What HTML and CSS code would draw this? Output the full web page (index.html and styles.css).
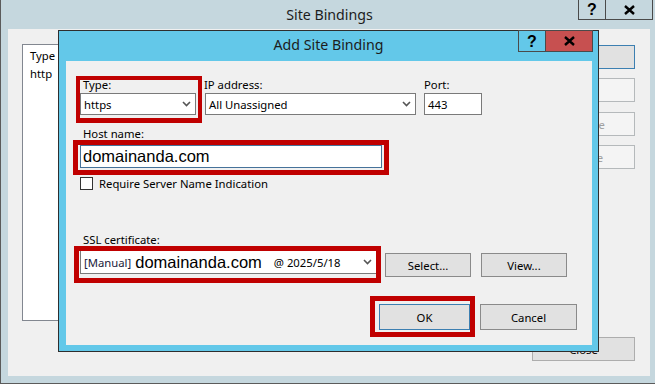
FILE: index.html
```html
<!DOCTYPE html>
<html lang="en">
<head>
  <meta charset="UTF-8"/>
  <title>Site Bindings</title>
  <link rel="stylesheet" href="styles.css">
</head>
<body>
  <div class="desktop">
    <div class="window">
      <div class="titlebar">
        <span></span>
        <span class="title">Site Bindings</span>
        <div class="caption">
          <button class="cap">?</button>
          <button class="cap cap-close">
            <svg width="11" height="10" viewBox="0 0 11 10"><path d="M1 1 L10 9 M10 1 L1 9" stroke="#000" stroke-width="2.4"/></svg>
          </button>
        </div>
      </div>
      <div class="client">
        <div class="list">
          <div class="list-head"><span>Type</span></div>
          <div class="list-row"><span>http</span></div>
        </div>
        <div class="side-buttons">
          <button class="btn default">Add...</button>
          <button class="btn" disabled>Edit...</button>
          <button class="btn" disabled>Remove</button>
          <button class="btn" disabled>Browse</button>
          <button class="btn btn-close">Close</button>
        </div>
      </div>
    </div>

    <div class="dialog">
      <div class="titlebar dlg-titlebar">
        <span></span>
        <span class="title">Add Site Binding</span>
        <div class="caption">
          <button class="cap">?</button>
          <button class="cap cap-close red">
            <svg width="11" height="10" viewBox="0 0 11 10"><path d="M1 1 L10 9 M10 1 L1 9" stroke="#000" stroke-width="2.4"/></svg>
          </button>
        </div>
      </div>
      <div class="dlg-client">
        <div class="row">
          <div class="field f-type">
            <label>Type:</label>
            <div class="combo"><span>https</span>
              <svg class="arrow" width="9" height="6" viewBox="0 0 9 6"><path d="M1 1 L4.5 4.5 L8 1" fill="none" stroke="#555" stroke-width="1.6"/></svg>
            </div>
          </div>
          <div class="field f-ip">
            <label>IP address:</label>
            <div class="combo"><span>All Unassigned</span>
              <svg class="arrow" width="9" height="6" viewBox="0 0 9 6"><path d="M1 1 L4.5 4.5 L8 1" fill="none" stroke="#555" stroke-width="1.6"/></svg>
            </div>
          </div>
          <div class="field f-port">
            <label>Port:</label>
            <div class="textbox">443</div>
          </div>
        </div>

        <label class="lbl-host">Host name:</label>
        <div class="textbox host">domainanda.com</div>

        <div class="check-row">
          <span class="checkbox"></span>
          <span>Require Server Name Indication</span>
        </div>

        <label class="lbl-ssl">SSL certificate:</label>
        <div class="ssl-row">
          <div class="combo ssl">
            <span class="tag">[Manual]</span>
            <span class="big">domainanda.com</span>
            <span class="date">@ 2025/5/18</span>
            <svg class="arrow" width="9" height="6" viewBox="0 0 9 6"><path d="M1 1 L4.5 4.5 L8 1" fill="none" stroke="#555" stroke-width="1.6"/></svg>
          </div>
          <button class="btn btn-select">Select...</button>
          <button class="btn btn-view">View...</button>
        </div>

        <div class="ok-row">
          <button class="btn default btn-ok">OK</button>
          <button class="btn btn-cancel">Cancel</button>
        </div>

        <!-- annotation boxes -->
        <div class="mark mark-type"></div>
        <div class="mark mark-host"></div>
        <div class="mark mark-ssl"></div>
        <div class="mark mark-ok"></div>
      </div>
    </div>
  </div>
</body>
</html>
```

FILE: styles.css
```css
:root {
  --frame: #c5d7de;
  --frame-blue: #63c8e9;
  --client: #f0f0f0;
  --btn-bg: #e1e1e1;
  --btn-border: #adadad;
  --focus: #3c7fb1;
  --mark: #c00000;
  --ui-font: 11.3px 'Noto Sans', 'DejaVu Sans', sans-serif;
}

*, *::before, *::after { box-sizing: border-box; }

body {
  margin: 0;
  font: var(--ui-font);
  color: #000;
  background: var(--frame);
}

button { font: inherit; color: inherit; padding: 0; }

.desktop {
  position: relative;
  width: 655px;
  height: 384px;
  overflow: hidden;
}

.window {
  width: 655px;
  height: 384px;
  background: var(--frame);
  border-left: 1px solid #5b5b5b;
  border-bottom: 1px solid #5b5b5b;
  display: flex;
  flex-direction: column;
}

.titlebar {
  height: 29px;
  display: grid;
  grid-template-columns: 1fr auto 1fr;
  align-items: start;
}

.title {
  font-size: 14.2px;
  line-height: 30px;
  color: #1c1c1c;
  padding-left: 3px;
}

.caption {
  justify-self: end;
  display: flex;
  margin-right: 2px;
}

.cap {
  width: 28px;
  height: 20px;
  border: 1px solid #4a4a4a;
  border-top: none;
  background: transparent;
  font: bold 16px 'Liberation Sans', sans-serif;
  line-height: 19px;
  display: flex;
  align-items: center;
  justify-content: center;
}

.cap-close {
  width: 47px;
  border-left: none;
}

.client {
  flex: 1;
  margin: 0 5px 7px 7px;
  background: var(--client);
  display: flex;
  gap: 12px;
  padding: 15px 15px 15px 14px;
}

.list {
  width: 498px;
  height: 277px;
  background: #fff;
  border: 1px solid #828790;
}

.list-head { height: 20px; line-height: 21px; padding-left: 7px; }
.list-row { height: 17px; line-height: 17px; padding-left: 7px; }

.side-buttons {
  width: 103px;
  display: flex;
  flex-direction: column;
  padding-top: 1px;
}

.btn {
  height: 24px;
  background: var(--btn-bg);
  border: 1px solid var(--btn-border);
  text-align: center;
}

.btn.default { border-color: var(--focus); }

.btn:disabled {
  background: #f4f4f4;
  border-color: #b5b9bb;
  color: #a0a0a0;
}

.side-buttons .btn + .btn { margin-top: 9px; }
.side-buttons .btn:nth-child(3) { margin-top: 10px; }
.side-buttons .btn + .btn-close { margin-top: auto; }

/* Add Site Binding dialog */
.dialog {
  position: absolute;
  left: 58px;
  top: 30px;
  width: 541px;
  height: 322px;
  background: var(--frame-blue);
  border: 1px solid #2e2e2e;
  display: flex;
  flex-direction: column;
}

.dlg-titlebar { height: 30px; }
.dlg-titlebar .title { line-height: 28px; padding-left: 0; }
.dlg-titlebar .caption { margin-right: 5px; margin-top: -1px; }
.dlg-titlebar .cap { height: 22px; border-top: 1px solid #4a4a4a; }
.dlg-titlebar .cap-close { border-left: none; }
.cap.red { background: #c75050; }

.dlg-client {
  position: relative;
  flex: 1;
  margin: 0 6px 6px 7px;
  background: var(--client);
  padding: 16px 15px 0 14px;
}

.row { display: flex; }
.field label { display: block; height: 16px; line-height: 15px; padding-left: 3px; }
.f-ip label { margin-left: -4px; }
.f-port label { margin-left: -3px; }
.f-type { width: 116px; margin-right: 9px; }
.f-ip { width: 211px; margin-right: 8px; }
.f-port { width: 58px; }

.combo, .textbox {
  height: 22px;
  background: #fff;
  border: 1px solid #7a7a7a;
  display: flex;
  align-items: center;
  padding-left: 3px;
  white-space: nowrap;
}

.combo .arrow { margin-left: auto; margin-right: 4px; }

label { display: block; }

.lbl-host { margin-top: 11px; height: 16px; line-height: 16px; padding-left: 3px; }

.textbox.host {
  margin-top: 3px;
  width: 302px;
  height: 23px;
  border-color: #45729a;
  padding-left: 2px;
  font: 16.5px 'Liberation Sans', sans-serif;
}

.check-row {
  margin-top: 9px;
  height: 13px;
  display: flex;
  align-items: center;
  gap: 6px;
  line-height: 13px;
}

.checkbox {
  width: 13px;
  height: 13px;
  border: 1px solid #333;
  background: #fff;
}

.lbl-ssl { margin-top: 42px; height: 16px; line-height: 16px; padding-left: 3px; }

.ssl-row { margin-top: 2px; display: flex; align-items: flex-start; }

.combo.ssl { width: 297px; height: 24px; }
.ssl .tag { color: #1a1a3a; }
.ssl .big { font: 16.5px 'Liberation Sans', sans-serif; margin-left: 4px; }
.ssl .date { margin-left: 12px; }

.btn-select, .btn-view { width: 86px; margin-top: 3px; }
.btn-select { margin-left: 8px; }
.btn-view { margin-left: 10px; }

.ok-row {
  margin-top: 27px;
  display: flex;
  justify-content: flex-end;
  gap: 10px;
}

.btn-ok { width: 91px; height: 26px; }
.btn-cancel { width: 97px; height: 26px; border-color: #8a8a8a; }
.btn-select, .btn-view { border-color: #8a8a8a; }

/* red annotation rectangles drawn over the form */
.mark {
  position: absolute;
  border: 5px solid var(--mark);
}
.mark-type { left: 10px; top: 15px; width: 126px; height: 47px; border-width: 4px 4px 5px 4px; }
.mark-host { left: 7px; top: 79px; width: 316px; height: 35px; }
.mark-ssl { left: 8px; top: 185px; width: 307px; height: 37px; }
.mark-ok { left: 304px; top: 235px; width: 105px; height: 41px; }
```
